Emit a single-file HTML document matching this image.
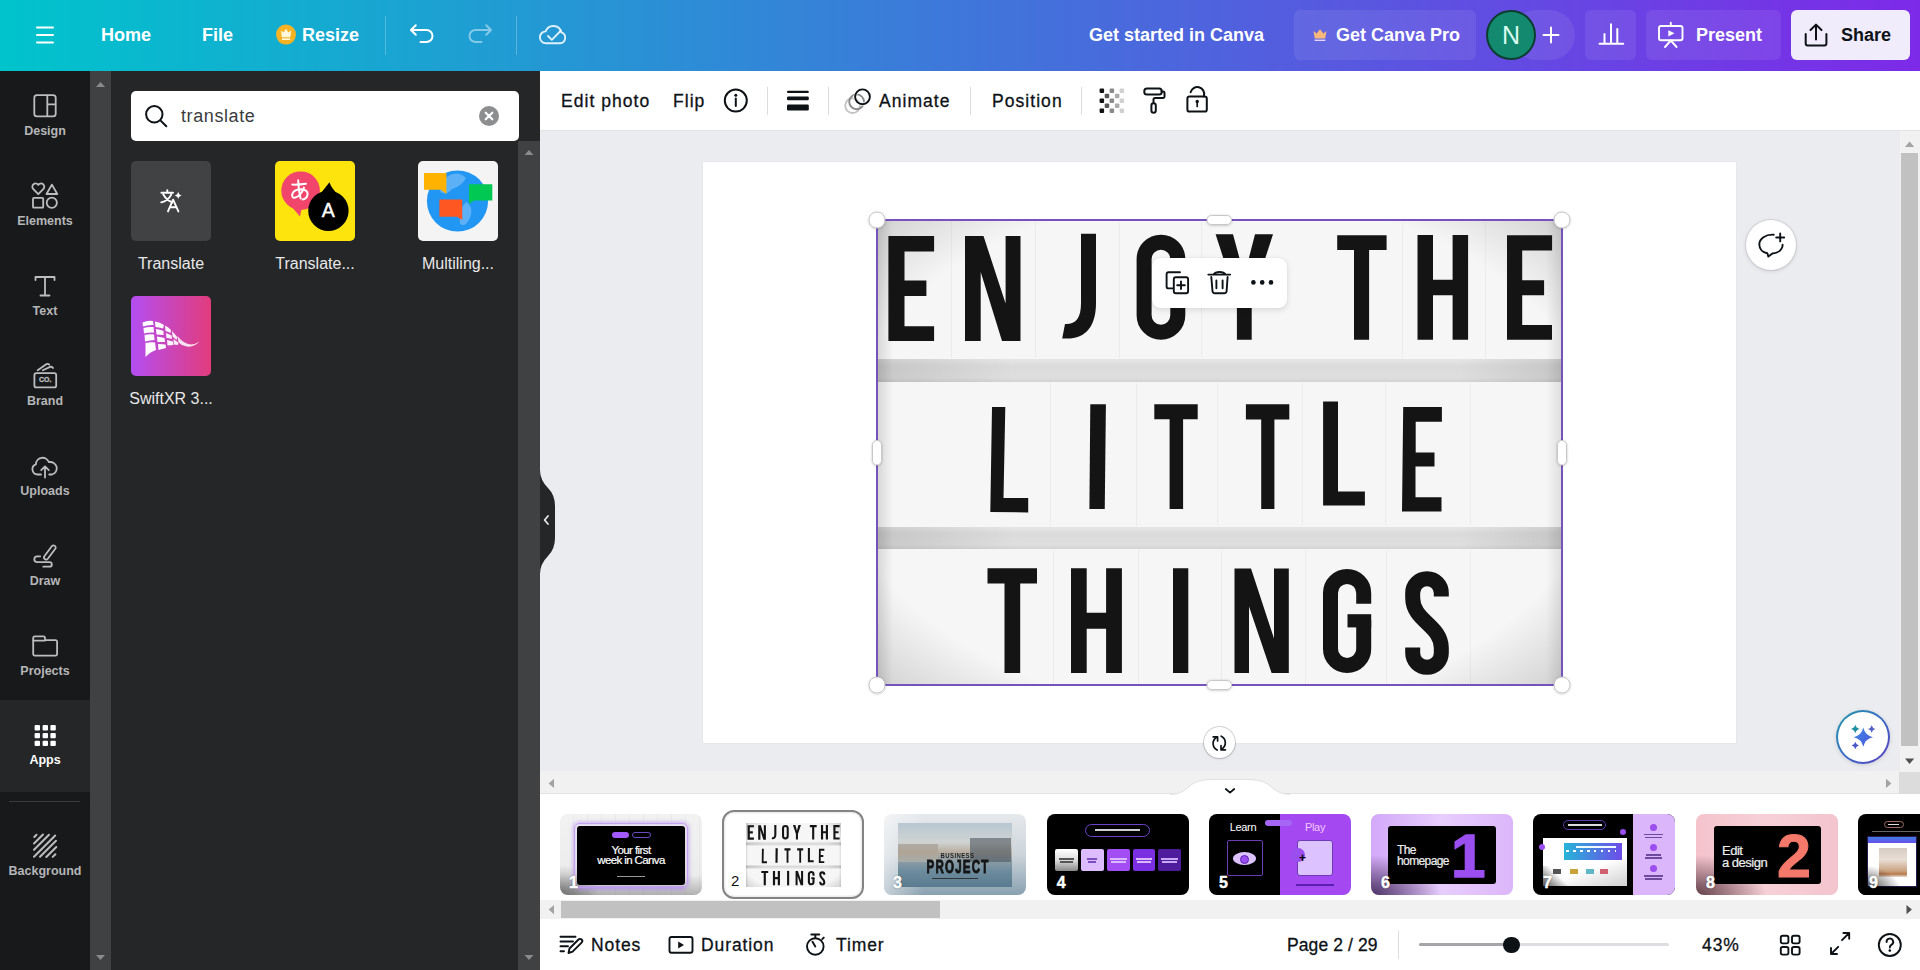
<!DOCTYPE html>
<html><head><meta charset="utf-8">
<style>
*{box-sizing:border-box;margin:0;padding:0}
html,body{width:1920px;height:970px;overflow:hidden;background:#fff;font-family:"Liberation Sans",sans-serif}
.a{position:absolute}
svg{display:block;overflow:visible}
#hdr{left:0;top:0;width:1920px;height:71px;background:linear-gradient(90deg,#00c4cc 0%,#7d2ae8 100%)}
.ht{color:#fff;font-weight:bold;font-size:18px;line-height:20px;white-space:nowrap}
.hbtn{background:rgba(255,255,255,0.08);border-radius:6px}
#side{left:0;top:71px;width:90px;height:899px;background:#18191b}
.nav{left:0;width:90px;height:90px}
.nl{position:absolute;left:0;width:90px;text-align:center;color:#b5b6b8;font-weight:bold;font-size:12.5px;line-height:14px}
.ni{position:absolute;left:33px;top:22px}
#track{left:90px;top:71px;width:21px;height:899px;background:#404143}
#panel{left:111px;top:71px;width:429px;height:899px;background:#252628}
#ptrack{left:518px;top:141px;width:22px;height:829px;background:#404143}
.tile{width:80px;height:80px;border-radius:5px;overflow:hidden}
.tl{color:#e8e8e8;font-size:16px;line-height:18px;white-space:nowrap;text-align:center}
#tool{left:540px;top:71px;width:1380px;height:60px;background:#fff;border-bottom:1px solid #e2e3e6}
.tt{color:#0d1216;font-size:17.5px;line-height:20px;white-space:nowrap;letter-spacing:1.05px;-webkit-text-stroke:0.3px #0d1216}
.dv{width:1px;height:28px;background:#dcdde0}
#canvas{left:540px;top:131px;width:1360px;height:640px;background:#ebecf0}
#vscroll{left:1900px;top:131px;width:20px;height:640px;background:#f1f1f1}
#hscroll{left:540px;top:771px;width:1380px;height:23px;background:#f1f1f1}
#film{left:540px;top:794px;width:1380px;height:176px;background:#fff}
.th{width:142px;height:81px;border-radius:8px;overflow:hidden;top:814px}
.num{position:absolute;left:6px;bottom:3px;color:#fff;font-weight:bold;font-size:16px;line-height:16px;text-shadow:0 0 2px rgba(0,0,0,.5);-webkit-text-stroke:0.4px #fff}
.ft{color:#0d1216;font-size:17.5px;line-height:20px;white-space:nowrap;letter-spacing:0.9px;-webkit-text-stroke:0.3px #0d1216}
</style></head><body>

<!-- HEADER -->
<div id="hdr" class="a">
  <!-- hamburger -->
  
  <div class="a ht" style="left:101px;top:25px">Home</div>
  <div class="a ht" style="left:202px;top:25px">File</div>
  
  <div class="a ht" style="left:302px;top:25px">Resize</div>
  <div class="a" style="left:385px;top:16px;width:1px;height:39px;background:rgba(255,255,255,0.25)"></div>
  <div class="a" style="left:516px;top:16px;width:1px;height:39px;background:rgba(255,255,255,0.25)"></div>
  <div class="a ht" style="left:1089px;top:25px">Get started in Canva</div>
  <div class="a hbtn" style="left:1294px;top:10px;width:182px;height:50px"></div>
  <div class="a ht" style="left:1336px;top:25px">Get Canva Pro</div>
  <div class="a hbtn" style="left:1511px;top:10px;width:64px;height:50px;border-radius:25px"></div>
  <div class="a" style="left:1486px;top:10px;width:50px;height:50px;border-radius:50%;background:#13896f;border:2px solid #0c3d30"></div>
  <div class="a" style="left:1486px;top:22px;width:50px;text-align:center;color:#d9fbef;font-size:25px;line-height:26px">N</div>
  <div class="a hbtn" style="left:1585px;top:10px;width:51px;height:50px"></div>
  <div class="a hbtn" style="left:1646px;top:10px;width:135px;height:50px"></div>
  <div class="a ht" style="left:1696px;top:25px">Present</div>
  <div class="a" style="left:1791px;top:10px;width:119px;height:50px;border-radius:6px;background:#f1ecfc"></div>
  <div class="a ht" style="left:1841px;top:25px;color:#0d1216">Share</div>
<svg class="a" style="left:36px;top:26px" width="18" height="18" viewBox="0 0 18 18"><path d="M1 1.5h16M1 9h16M1 16.5h16" stroke="#fff" stroke-width="2" stroke-linecap="round"/></svg>
<svg class="a" style="left:0;top:0" width="1920" height="71">
    <circle cx="286" cy="34.6" r="10" fill="#f8b324"/>
    <path d="M281 30.5 L283.6 32.6 L286 28.8 L288.4 32.6 L291.2 30.5 L290.2 37.3 H281.8 Z" fill="#fff8e0"/>
    <rect x="282" y="38.4" width="8.2" height="1.6" fill="#fff8e0"/>
    <g fill="none" stroke="#fff" stroke-width="2" stroke-linecap="round" stroke-linejoin="round">
      <path d="M415.8 25.2 L411 30 L415.8 34.8 M411.3 30 H426.5 A6 6 0 0 1 426.5 42 H420.5"/>
    </g>
    <g fill="none" stroke="rgba(255,255,255,0.45)" stroke-width="2" stroke-linecap="round" stroke-linejoin="round">
      <path d="M486.2 25.2 L491 30 L486.2 34.8 M490.7 30 H475.5 A6 6 0 0 0 475.5 42 H481.5"/>
    </g>
    <g fill="none" stroke="rgba(255,255,255,0.85)" stroke-width="1.9" stroke-linecap="round" stroke-linejoin="round">
      <path d="M546 43.2 H560 A5.6 5.6 0 0 0 561.3 32.3 A8.2 8.2 0 0 0 545.6 31.4 A5.9 5.9 0 0 0 546 43.2 Z"/>
      <path d="M548 36 L551.8 39.8 L561 30.5"/>
    </g>
    <path d="M1313.5 31 L1316.6 33.4 L1320 29.2 L1323.4 33.4 L1326.5 31 L1325.2 38.5 H1314.8 Z" fill="#f9b87a"/>
    <rect x="1314.6" y="39.6" width="10.8" height="1.4" fill="#e4d7fb"/>
    <g fill="none" stroke="#fff" stroke-width="2" stroke-linecap="round">
      <path d="M1551 27.5 V42.5 M1543.5 35 H1558.5"/>
      <path d="M1599.5 43.8 H1623.2 M1604.5 43 V34 M1611 43 V24.2 M1617.3 43 V29"/>
    </g>
    <g fill="none" stroke="#fff" stroke-width="1.9" stroke-linecap="round" stroke-linejoin="round">
      <rect x="1659" y="26" width="23.5" height="14.3" rx="2"/>
      <path d="M1670.8 22.8 V26 M1670.8 40.5 L1665 47 M1670.8 40.5 L1676.6 47"/>
    </g>
    <path d="M1668.3 30.2 L1674.5 33.3 L1668.3 36.4 Z" fill="#fff"/>
    <g fill="none" stroke="#0d1216" stroke-width="2" stroke-linecap="round" stroke-linejoin="round">
      <path d="M1810.5 30 L1816 24.6 L1821.5 30 M1816 25 V39.5"/>
      <path d="M1805.7 34 V43.5 A2 2 0 0 0 1807.7 45.5 H1824.4 A2 2 0 0 0 1826.4 43.5 V34"/>
    </g>
  </svg>
</div>

<!-- SIDEBAR -->
<div id="side" class="a">
  <div class="a" style="left:0;top:629px;width:90px;height:92px;background:#252628"></div>
  <div class="a" style="left:0;top:0;width:90px;height:629px;background:#18191b;border-bottom-right-radius:12px"></div>
  <div class="a" style="left:0;top:721px;width:90px;height:178px;background:#18191b;border-top-right-radius:12px"></div>
  <div class="a" style="left:9px;top:730px;width:71px;height:1px;background:#3a3b3e"></div>
  <div class="nl" style="top:53px">Design</div>
  <div class="nl" style="top:143px">Elements</div>
  <div class="nl" style="top:233px">Text</div>
  <div class="nl" style="top:323px">Brand</div>
  <div class="nl" style="top:413px">Uploads</div>
  <div class="nl" style="top:503px">Draw</div>
  <div class="nl" style="top:593px">Projects</div>
  <div class="nl" style="top:682px;color:#fff">Apps</div>
  <div class="nl" style="top:793px">Background</div>
</div>
<svg class="a" style="left:0;top:0" width="90" height="970">
  <g fill="none" stroke="#bcbdbf" stroke-width="1.8" stroke-linecap="round" stroke-linejoin="round">
    <rect x="34.3" y="95.1" width="21.4" height="21.2" rx="2.6"/>
    <path d="M47.3 95.5 V116 M47.6 104.4 H55.3"/>
    <path d="M38.3 194.2 L32.9 188.6 A3.1 3.1 0 0 1 38.3 184.9 A3.1 3.1 0 0 1 43.7 188.6 Z"/>
    <path d="M51.9 184.6 L57.3 194 H46.5 Z"/>
    <rect x="33" y="197.9" width="10.2" height="9.8" rx="0.8"/>
    <circle cx="51.8" cy="202.7" r="5.1"/>
    <path d="M35.5 277 H54.5 M45 277 V295.5 M40.5 295.5 H49.5 M35.5 277 V280 M54.5 277 V280"/>
    <rect x="34.4" y="373.2" width="21.8" height="14.2" rx="2"/>
    <path d="M37.7 370.2 L46.6 364.1 Q48.2 363.3 49.3 364.8 M42.8 370.2 L50.2 366.9 Q52 366.3 53 368"/>
    <path d="M41 474.5 H37.6 A5.2 5.2 0 0 1 35.9 464.4 A6.7 6.7 0 0 1 48.9 462.2 A5.6 5.6 0 0 1 52 474.5 H49.2"/>
    <path d="M45 477.6 V466.4 M41.2 470.2 L45 466.4 L48.8 470.2"/>
    <path d="M45.5 556.5 L53.2 546.3 A2.2 2.2 0 0 1 56.5 549 L48.8 559.2 A2 2 0 0 1 45.5 556.5 Z" transform="translate(-1,-0.5)"/>
    <path d="M40.2 556.3 H37.2 A2.9 2.9 0 0 0 37.2 562.1 H49.5 A2.3 2.3 0 0 1 49.5 566.7 H43.3"/>
    <path d="M33.2 638 A1.6 1.6 0 0 1 34.8 636.4 H43.4 A1.6 1.6 0 0 1 45 638 V640.2 H55.5 A1.6 1.6 0 0 1 57.1 641.8 V654 A1.6 1.6 0 0 1 55.5 655.6 H34.8 A1.6 1.6 0 0 1 33.2 654 Z"/>
    <path d="M33.2 640.6 H45"/>
  </g>
  <text x="45.3" y="382.4" text-anchor="middle" font-family="Liberation Sans" font-weight="bold" font-size="7" fill="#bcbdbf" stroke="#bcbdbf" stroke-width="0.3">CO.</text>
  <g fill="#fff">
    <rect x="34.6" y="725" width="5.4" height="5.4" rx="1"/><rect x="42.6" y="725" width="5.4" height="5.4" rx="1"/><rect x="50.4" y="725" width="5.4" height="5.4" rx="1"/>
    <rect x="34.6" y="732.9" width="5.4" height="5.4" rx="1"/><rect x="42.6" y="732.9" width="5.4" height="5.4" rx="1"/><rect x="50.4" y="732.9" width="5.4" height="5.4" rx="1"/>
    <rect x="34.6" y="740.7" width="5.4" height="5.4" rx="1"/><rect x="42.6" y="740.7" width="5.4" height="5.4" rx="1"/><rect x="50.4" y="740.7" width="5.4" height="5.4" rx="1"/>
  </g>
  <g stroke="#bcbdbf" stroke-width="2" stroke-linecap="round">
    <path d="M34.3 837 L36.5 834.8 M34 843.5 L43 834.5 M34 849.7 L49 834.7 M34 856.7 L55.2 835.5 M40 856.8 L56 840.8 M46.3 857 L56.3 847 M52.7 856.9 L55.4 854.2"/>
  </g>
</svg>
<div id="track" class="a"></div>
<div id="panel" class="a"></div>
<div id="ptrack" class="a"></div>
<!-- scroll arrows -->
<svg class="a" style="left:0;top:0" width="540" height="970">
  <path d="M96 87 L100.5 82 L105 87 Z" fill="#8a8b8d"/>
  <path d="M96 955 L100.5 960 L105 955 Z" fill="#8a8b8d"/>
  <path d="M524.5 155 L529 150 L533.5 155 Z" fill="#8a8b8d"/>
  <path d="M524.5 955 L529 960 L533.5 955 Z" fill="#8a8b8d"/>
</svg>
<!-- search -->
<div class="a" style="left:131px;top:91px;width:388px;height:50px;background:#fff;border-radius:5px"></div>
<svg class="a" style="left:0;top:0" width="540" height="300">
  <g fill="none" stroke="#0d1216" stroke-width="2" stroke-linecap="round">
    <circle cx="154.3" cy="114.3" r="8.2"/>
    <path d="M160.4 120.4 L166.3 126.3"/>
  </g>
  <circle cx="489" cy="116" r="10" fill="#8d8e90"/>
  <path d="M485.7 112.7 L492.3 119.3 M492.3 112.7 L485.7 119.3" stroke="#fff" stroke-width="2.2" stroke-linecap="round"/>
</svg>
<div class="a" style="left:181px;top:106px;color:#3b3c3e;font-size:18px;line-height:20px;letter-spacing:0.6px">translate</div>
<!-- tiles -->
<div class="a tile" style="left:131px;top:161px;background:#414244"></div>
<div class="a tile" style="left:275px;top:161px;background:#fde40c"></div>
<div class="a tile" style="left:418px;top:161px;background:#f4f4f4"></div>
<div class="a tile" style="left:131px;top:296px;background:linear-gradient(90deg,#b44ef2,#e23c7c)"></div>
<svg class="a" style="left:0;top:0" width="540" height="400">
  <g fill="none" stroke="#fff" stroke-width="1.9" stroke-linecap="round" stroke-linejoin="round">
    <path d="M161.4 192.8 H173 M167.3 190.2 V192.8 M163.3 194.6 Q166.8 200.6 172.3 202.4 M171.2 194.6 Q168.2 200.8 161.2 202.4"/>
    <path d="M168 211.4 L173.1 199.7 L178.4 211.4 M169.8 207.2 H176.6"/>
  </g>
  <path d="M178.2 191.5 Q178.7 195 181.8 195.5 Q178.7 196 178.2 199.3 Q177.7 196 174.6 195.5 Q177.7 195 178.2 191.5 Z" fill="#fff"/>
  <!-- tile 2 -->
  <circle cx="300.6" cy="190.7" r="19.3" fill="#f2456b"/>
  <path d="M291 206 L300 216.5 L302 206 Z" fill="#f2456b"/>
  <path d="M329.5 182.3 Q331 188 338.5 195 L321 193 Z" fill="#000"/>
  <circle cx="328.4" cy="210.8" r="20.2" fill="#000"/>
  <g fill="none" stroke="#fff" stroke-width="2" stroke-linecap="round" stroke-linejoin="round">
    <path d="M292.3 184.6 Q299 184.8 306 183.8"/>
    <path d="M298.2 180.3 Q298.3 190 300.6 198.4"/>
    <path d="M304 187.6 Q300.5 196.5 295.2 197.6 Q291.6 198.2 292.2 194.4 Q293.4 189.4 301.2 189.2 Q307.8 189.6 307.6 194.2 Q307.2 198.6 302.6 199.6"/>
  </g>
  <text x="328.2" y="216.8" text-anchor="middle" font-family="Liberation Sans" font-size="19.5" fill="#fff" stroke="#fff" stroke-width="0.4">A</text>
  <!-- tile 3 -->
  <circle cx="457.5" cy="201" r="30.6" fill="#2196f3"/>
  <path d="M448 176 Q458 170 466 178 Q462 186 452 189 Q446 196 440 192 Q441 182 448 176 Z M466 202 Q474 206 470 218 Q465 228 460 224 Q458 210 466 202 Z M480 190 Q486 192 484 200 Q479 198 480 190 Z" fill="#5cb0f5"/>
  <path d="M424 173 H446.4 V194 L441 189.8 H424 Z" fill="#ffb300"/>
  <path d="M469 184.2 H492.3 V200.5 H474 L469 204 Z" fill="#00c853"/>
  <path d="M439.4 199.5 H462.2 V220 L457 216.7 H439.4 Z" fill="#ff5722"/>
  <!-- tile 4 -->
  <g fill="#fff">
    <path d="M142.5 322.5 Q148 320 153 321 L153.5 325 Q148 324.5 143 326.5 Z"/>
    <path d="M143.5 328 Q148 326.5 153.5 327 L154 332.5 Q149 332 144 333.5 Z"/>
    <path d="M144.5 335 Q149 334 154 334.5 L154.5 340 Q150 340 145 341.5 Z"/>
    <path d="M145.5 343 Q150 342 155 342.5 L156 350 Q150 352 145.5 357 Z"/>
    <path d="M155 321.5 Q160 322 164 325 L163 328.5 Q159 327 155.5 327 Z"/>
    <path d="M156 329 Q160 329.5 163.5 331 L163.5 335 Q160 334.5 156.5 334.5 Z"/>
    <path d="M157 336.5 Q161 337 164.5 338 L165 342 Q161 342 157.5 342 Z"/>
    <path d="M158 344 Q162 344 165.5 344.5 L166 348 Q162 349 158.5 350 Z"/>
    <path d="M165 325.5 Q168.5 327 171 330 L170.5 333 Q168 331.5 165.5 331 Z" opacity="0.95"/>
    <path d="M166 333 Q169 334 171.5 335.5 L172 339 Q169 338 166.5 338 Z" opacity="0.95"/>
    <path d="M167 340 Q170 340.5 173 341.5 L173.5 345 Q170 345 167.5 345.5 Z" opacity="0.95"/>
    <path d="M172 331 Q175 334 177.5 337.5 L176.5 340 Q174.5 338 172.5 336.5 Z" opacity="0.9"/>
    <path d="M173.5 339 Q176 341 178.5 342.5 L178 345 Q175.5 344.5 174 344.5 Z" opacity="0.9"/>
    <path d="M177.5 336 Q182 342 188 344 Q194 345.5 199.5 341.5 Q194 347.5 187 346.5 Q181 345.5 178.5 342 Z" opacity="0.85"/>
  </g>
</svg>
<div class="a tl" style="left:121px;top:255px;width:100px">Translate</div>
<div class="a tl" style="left:265px;top:255px;width:100px">Translate...</div>
<div class="a tl" style="left:408px;top:255px;width:100px">Multiling...</div>
<div class="a tl" style="left:121px;top:390px;width:100px">SwiftXR 3...</div>


<!-- TOOLBAR -->
<div id="tool" class="a"></div>
<div class="a tt" id="t1" style="left:561px;top:91px">Edit photo</div>
<div class="a tt" id="t2" style="left:673px;top:91px">Flip</div>
<div class="a tt" id="t3" style="left:879px;top:91px">Animate</div>
<div class="a tt" id="t4" style="left:992px;top:91px">Position</div>
<div class="a dv" style="left:767px;top:87px"></div>
<div class="a dv" style="left:828px;top:87px"></div>
<div class="a dv" style="left:970px;top:87px"></div>
<div class="a dv" style="left:1081px;top:87px"></div>
<svg class="a" style="left:0;top:0" width="1920" height="131">
  <g fill="none" stroke="#0d1216" stroke-width="2" stroke-linecap="round" stroke-linejoin="round">
    <circle cx="735.8" cy="100.6" r="11"/>
    <path d="M735.8 98.5 V106"/>
    <rect x="1144.3" y="88.6" width="17.4" height="6" rx="2.6"/>
    <path d="M1161.6 91.5 H1163 A1.5 1.5 0 0 1 1164.5 93 V96.4 A1.5 1.5 0 0 1 1163 97.9 H1155 A1.5 1.5 0 0 0 1153.5 99.4 V103"/>
    <rect x="1151.4" y="103.2" width="4.4" height="9.6" rx="2.2"/>
    <rect x="1187.4" y="96.4" width="19.4" height="15.2" rx="2.2"/>
    <path d="M1190.6 92.3 A6.6 6.6 0 0 1 1204 95.6 V96.4"/>
  </g>
  <circle cx="735.8" cy="95.3" r="1.5" fill="#0d1216"/>
  <circle cx="1197.2" cy="101.5" r="1.7" fill="#0d1216"/>
  <path d="M1197.2 101.5 V106.5" stroke="#0d1216" stroke-width="1.7" stroke-linecap="round"/>
  <g fill="#0d1216">
    <rect x="787" y="90.8" width="21.8" height="2.2" rx="1"/>
    <rect x="787" y="96.6" width="21.8" height="3.6" rx="1.2"/>
    <rect x="787" y="104.6" width="21.8" height="5.9" rx="1.2"/>
  </g>
  <g fill="none" stroke-width="1.9">
    <circle cx="852.6" cy="105.6" r="7.4" stroke="#c4c4c4"/>
    <circle cx="856.6" cy="101.8" r="7.4" stroke="#8c8c8c"/>
    <circle cx="862.5" cy="96.8" r="7.4" stroke="#fff" stroke-width="3.5"/>
    <circle cx="862.5" cy="96.8" r="7.4" stroke="#0d1216"/>
  </g>
  <g>
    <rect x="1099.6" y="88.6" width="4.5" height="4.5" rx="1" fill="#111"/>
    <rect x="1099.6" y="98.4" width="4.5" height="4.5" rx="1" fill="#111"/>
    <rect x="1099.6" y="108.6" width="4.5" height="4.5" rx="1" fill="#111"/>
    <rect x="1104.7" y="93.7" width="4.5" height="4.5" rx="1" fill="#555"/>
    <rect x="1104.7" y="103.5" width="4.5" height="4.5" rx="1" fill="#555"/>
    <rect x="1109.6" y="88.6" width="4.5" height="4.5" rx="1" fill="#8a8a8a"/>
    <rect x="1109.6" y="98.4" width="4.5" height="4.5" rx="1" fill="#8a8a8a"/>
    <rect x="1109.6" y="108.6" width="4.5" height="4.5" rx="1" fill="#8a8a8a"/>
    <rect x="1114.9" y="93.7" width="4.5" height="4.5" rx="1" fill="#ababab"/>
    <rect x="1114.9" y="103.5" width="4.5" height="4.5" rx="1" fill="#ababab"/>
    <rect x="1119.6" y="88.6" width="4.5" height="4.5" rx="1" fill="#d0d0d0"/>
    <rect x="1119.6" y="98.4" width="4.5" height="4.5" rx="1" fill="#d0d0d0"/>
    <rect x="1119.6" y="108.6" width="4.5" height="4.5" rx="1" fill="#d0d0d0"/>
  </g>
</svg>
<div id="canvas" class="a"></div>
<div class="a" style="left:703px;top:162px;width:1033px;height:581px;background:#fff;box-shadow:0 0 1px rgba(0,0,0,0.12)"></div>
<!-- letterboard -->
<svg class="a" style="left:877px;top:220px" width="685" height="465" viewBox="877 220 685 465">
  <defs>
    <radialGradient id="vig" cx="50%" cy="50%" r="71%">
      <stop offset="0.78" stop-color="#000" stop-opacity="0"/>
      <stop offset="1" stop-color="#000" stop-opacity="0.15"/>
    </radialGradient>
    <linearGradient id="edl" x1="0" y1="0" x2="1" y2="0"><stop offset="0" stop-color="#000" stop-opacity="0.13"/><stop offset="1" stop-color="#000" stop-opacity="0"/></linearGradient>
    <linearGradient id="edr" x1="1" y1="0" x2="0" y2="0"><stop offset="0" stop-color="#000" stop-opacity="0.1"/><stop offset="1" stop-color="#000" stop-opacity="0"/></linearGradient>
    <linearGradient id="strip" x1="0" y1="0" x2="0" y2="1">
      <stop offset="0" stop-color="#e6e6e6"/>
      <stop offset="0.3" stop-color="#dbdbdb"/>
      <stop offset="0.8" stop-color="#dedede"/>
      <stop offset="1" stop-color="#d3d3d3"/>
    </linearGradient>
    <linearGradient id="stripx" x1="0" y1="0" x2="1" y2="0">
      <stop offset="0" stop-color="#000" stop-opacity="0.1"/>
      <stop offset="0.2" stop-color="#000" stop-opacity="0"/>
      <stop offset="0.85" stop-color="#000" stop-opacity="0"/>
      <stop offset="1" stop-color="#000" stop-opacity="0.1"/>
    </linearGradient>
  </defs>
  <rect x="877" y="220" width="685" height="465" fill="#f6f6f6"/>
  <g stroke="#ececec" stroke-width="1">
    <path d="M951.5 222 V358 M1035.5 222 V358 M1119.5 222 V358 M1201.5 222 V358 M1402.5 222 V358 M1485.5 222 V358"/>
    <path d="M1050.5 383 V526 M1136.5 383 V526 M1217.5 383 V526 M1302.5 383 V526 M1385.5 383 V526 M1470.5 383 V526"/>
    <path d="M1053.5 550 V684 M1138.5 550 V684 M1221.5 550 V684 M1305.5 550 V684 M1386.5 550 V684 M1470.5 550 V684"/>
  </g>
  <rect x="877" y="359" width="685" height="23" fill="url(#strip)"/>
  <rect x="877" y="527" width="685" height="22" fill="url(#strip)"/>
  <rect x="877" y="359" width="685" height="23" fill="url(#stripx)"/>
  <rect x="877" y="527" width="685" height="22" fill="url(#stripx)"/>
  <rect x="877" y="220" width="685" height="465" fill="url(#vig)"/><rect x="877" y="220" width="16" height="465" fill="url(#edl)"/><rect x="1546" y="220" width="16" height="465" fill="url(#edr)"/>
  <g fill="#141414">
    <!-- ENJOY THE -->
    <path d="M888.4 236 H934.1 V251.4 H904.5 V280.4 H926.4 V295.9 H904.5 V326.2 H934.1 V341 H888.4 Z"/>
    <path d="M965 236 H983.5 L1005.6 303.6 V236 H1020.5 V341 H1002 L980.7 272 V341 H965 Z"/>
    <path d="M1081 233.8 H1096 V303 C1096 326 1086 339 1066 338.6 L1062.2 338.6 L1065 324 C1076 324.5 1081 318 1081 303 Z"/>
    <path d="M1337.2 235.3 H1386.6 V250.1 H1369.1 V339.7 H1354 V250.1 H1337.2 Z"/>
    <path d="M1417.5 235 H1433 V279.8 H1452.6 V235 H1468.1 V339.7 H1452.6 V295.2 H1433 V339.7 H1417.5 Z"/>
    <path d="M1507 235.3 H1552.1 V250.5 H1522.2 V280.2 H1544.1 V295.2 H1522.2 V324.9 H1552 V339.7 H1507 Z"/>
    <path d="M1215.6 234.3 H1233 L1244.3 276 L1255 234.3 H1273 L1251.7 300 V339.7 H1236.9 V300 Z"/>
    <!-- LITTLE -->
    <path d="M992 407 H1005.3 L1003.5 498 H1028.2 V512.5 L990.3 512 Z"/>
    <path d="M1090.3 404.2 H1105.9 L1104.75 509 H1089.4 Z"/>
    <path d="M1154.3 404.2 H1197.7 V419.2 H1183.1 V509 H1169.6 V419.2 H1154.3 Z"/>
    <path d="M1245.9 404.2 H1289.3 V419.5 H1274.4 V509 H1261.2 V419.5 H1245.9 Z"/>
    <path d="M1323.1 401.4 H1338 V491.4 H1364.9 V505.5 H1323.1 Z"/>
    <path d="M1403.2 407 H1441.9 V421.7 H1415.7 V452.4 H1434.5 V466.6 H1415.5 V497.2 H1441.5 V511.4 H1402 Z"/>
    <!-- THINGS -->
    <path d="M987.5 568.2 H1037 V583.5 H1020.2 V673 H1004.5 V583.5 H987.5 Z"/>
    <path d="M1071 568.2 H1086.7 V612.8 H1106.1 V568.2 H1121.9 V673 H1106.1 V628.8 H1086.7 V673 H1071 Z"/>
    <path d="M1173 568.2 H1188.3 V673 H1173 Z"/>
    <path d="M1234.5 568.6 H1251 L1274 638.5 V568.6 H1288.8 V673 H1271.6 L1249 606.5 V673 H1234.5 Z"/>
    <rect x="1347.5" y="614.2" width="23.7" height="13.2"/>
  </g>
  <g fill="none" stroke="#141414" stroke-width="15">
    <rect x="1144.1" y="242.2" width="33.7" height="90" rx="16.85"/>
    <path d="M1363.7 603.7 V593 A16.6 16.6 0 0 0 1330.5 593 V648.9 A16.6 16.6 0 0 0 1363.7 648.9 V620"/>
    <path d="M1441.3 596.5 V593 A14.3 14.3 0 0 0 1412.7 593 V598 C1412.7 621 1441.3 625 1441.3 648 V653 A14.3 14.3 0 0 1 1412.7 653 V647.5"/>
  </g>
</svg>
<!-- selection -->
<svg class="a" style="left:0;top:0" width="1920" height="800">
  <defs>
    <filter id="hs" x="-50%" y="-50%" width="200%" height="200%"><feDropShadow dx="0" dy="0.5" stdDeviation="0.8" flood-color="#000" flood-opacity="0.25"/></filter>
  </defs>
  <rect x="877" y="220" width="685" height="465" fill="none" stroke="#7652bd" stroke-width="2"/>
  <g fill="#fff" stroke="#c8c8c8" stroke-width="1" filter="url(#hs)">
    <circle cx="877" cy="220" r="8"/>
    <circle cx="1562" cy="220" r="8"/>
    <circle cx="877" cy="685" r="8"/>
    <circle cx="1562" cy="685" r="8"/>
    <rect x="1207" y="215.5" width="24.5" height="9" rx="4.5"/>
    <rect x="1207" y="680.5" width="24.5" height="9" rx="4.5"/>
    <rect x="872.5" y="440.5" width="9" height="24.5" rx="4.5"/>
    <rect x="1557.5" y="440.5" width="9" height="24.5" rx="4.5"/>
  </g>
</svg>
<!-- floating toolbar -->
<div class="a" style="left:1152px;top:258px;width:135px;height:49.5px;background:#fff;border-radius:8px;box-shadow:0 2px 6px rgba(0,0,0,0.12),0 0 1px rgba(0,0,0,0.15)"></div>
<svg class="a" style="left:0;top:0" width="1920" height="800">
  <g fill="none" stroke="#0d1216" stroke-width="1.9" stroke-linecap="round" stroke-linejoin="round">
    <path d="M1180 272.3 H1168.6 A2 2 0 0 0 1166.6 274.3 V286.4 A2 2 0 0 0 1168.6 288.4 H1173"/>
    <rect x="1173.8" y="277.3" width="14.3" height="16" rx="2"/>
    <path d="M1181 281.5 V289 M1177.2 285.3 H1184.8"/>
    <path d="M1208.3 274.6 H1230.2 M1213.5 274.6 A6.5 4 0 0 1 1225.6 274.6 M1211.3 277 L1212.5 291 A2.3 2.3 0 0 0 1214.8 293.3 H1224.3 A2.3 2.3 0 0 0 1226.6 291 L1227.6 277 M1216.4 280.5 V288.3 M1222.6 280.5 V288.3"/>
  </g>
  <g fill="#0d1216"><circle cx="1253.4" cy="282.4" r="2.3"/><circle cx="1262.2" cy="282.4" r="2.3"/><circle cx="1271" cy="282.4" r="2.3"/></g>
</svg>
<!-- rotate button -->
<div class="a" style="left:1203.5px;top:726.8px;width:31px;height:31px;border-radius:50%;background:#fff;box-shadow:0 0 0 1px rgba(0,0,0,0.16),0 1px 3px rgba(0,0,0,0.1)"></div>
<svg class="a" style="left:1204px;top:727.5px" width="30" height="30" viewBox="0 0 30 30">
  <g fill="none" stroke="#0d1216" stroke-width="1.7" stroke-linecap="round" stroke-linejoin="round">
    <path d="M13.2 22 A7.2 7.2 0 0 1 12.8 9.2 M17.2 8.2 A7.2 7.2 0 0 1 17.6 21"/>
    <path d="M9.2 8.9 H13.6 V13 M17 17.5 V21.8 H21.4"/>
  </g>
</svg>
<!-- comment button -->
<div class="a" style="left:1746px;top:220px;width:50px;height:50px;border-radius:50%;background:#fff;box-shadow:0 0 0 1px rgba(0,0,0,0.07),0 1px 4px rgba(0,0,0,0.14)"></div>
<svg class="a" style="left:1746px;top:220px" width="50" height="50" viewBox="0 0 50 50">
  <g fill="none" stroke="#0d1216" stroke-width="1.9" stroke-linecap="round" stroke-linejoin="round">
    <path d="M27.7 14.7 C19.5 14.2 13.3 18.8 13.3 24.5 C13.3 29 16.8 32.4 21.3 33.3 L22.4 36.6 L26.4 33.5 C32.3 32.8 36.6 29.5 36.6 24.8"/>
    <path d="M34.2 13.5 V21.4 M30.2 17.5 H38.2"/>
  </g>
</svg>
<!-- magic button -->
<div class="a" style="left:1836px;top:710px;width:54px;height:54px;border-radius:50%;background:linear-gradient(135deg,#1f9aa6,#3a6cc6 50%,#5a3cc0);box-shadow:0 1px 4px rgba(0,0,0,0.12)"></div>
<div class="a" style="left:1838px;top:712px;width:50px;height:50px;border-radius:50%;background:#fff"></div>
<svg class="a" style="left:1836px;top:710px" width="54" height="54" viewBox="0 0 54 54">
  <defs><linearGradient id="mg" x1="0" y1="0" x2="1" y2="1"><stop offset="0" stop-color="#3a8ae0"/><stop offset="1" stop-color="#4f55e0"/></linearGradient></defs>
  <path d="M27.3 17.6 Q29.028000000000002 25.471999999999998 36.9 27.2 Q29.028000000000002 28.928 27.3 36.8 Q25.572 28.928 17.700000000000003 27.2 Q25.572 25.471999999999998 27.3 17.6 Z" fill="url(#mg)"/><path d="M19.3 14.499999999999998 Q20.092000000000002 18.107999999999997 23.700000000000003 18.9 Q20.092000000000002 19.692 19.3 23.299999999999997 Q18.508 19.692 14.9 18.9 Q18.508 18.107999999999997 19.3 14.499999999999998 Z" fill="#1f8fa0"/><path d="M35.7 15.3 Q36.366 18.334 39.400000000000006 19 Q36.366 19.666 35.7 22.7 Q35.034000000000006 19.666 32.0 19 Q35.034000000000006 18.334 35.7 15.3 Z" fill="#5560c4"/><path d="M19.3 31.8 Q19.966 34.834 23.0 35.5 Q19.966 36.166 19.3 39.2 Q18.634 36.166 15.600000000000001 35.5 Q18.634 34.834 19.3 31.8 Z" fill="#4a58c8"/>
</svg>
<div id="vscroll" class="a"></div>
<div class="a" style="left:1901px;top:153px;width:17px;height:593px;background:#c1c1c1"></div>
<div id="hscroll" class="a" style="border-bottom:1px solid #e3e3e3"></div>
<div class="a" style="left:1899px;top:772px;width:21px;height:22px;background:#dcdcdc"></div>
<div id="film" class="a"></div>
<!-- tab with chevron -->
<svg class="a" style="left:1170px;top:776px" width="120" height="22" viewBox="0 0 120 22">
  <path d="M0 19 Q10 19 18 12 Q26 4 40 4 H80 Q94 4 102 12 Q110 19 120 19 V22 H0 Z" fill="#fff"/>
  <path d="M0 18.5 Q10 18.5 18 11.5 Q26 3.5 40 3.5 H80 Q94 3.5 102 11.5 Q110 18.5 120 18.5" fill="none" stroke="#e2e2e2" stroke-width="1"/>
  <path d="M55.8 13 L60 16.6 L64.2 13" fill="none" stroke="#0d1216" stroke-width="1.8" stroke-linecap="round" stroke-linejoin="round"/>
</svg>
<!-- thumbnails -->
<div class="a th" style="left:560px;background:linear-gradient(180deg,#f2f2f2 0%,#ececec 75%,#cfcfcf 88%,#b0b0b0 100%)">
  <div class="a" style="left:0;top:0;width:142px;height:81px;background:radial-gradient(ellipse 40px 30px at 0% 100%,rgba(40,40,40,0.5),rgba(40,40,40,0) 100%)"></div>
  <div class="a" style="left:0;top:0;width:142px;height:81px;background:repeating-linear-gradient(90deg,transparent 0 13px,rgba(0,0,0,0.03) 13px 14px)"></div>
  <div class="a" style="left:14px;top:9px;width:114px;height:65px;border-radius:5px;border:1.5px solid #c6a4f4;box-shadow:0 0 4px 1px rgba(175,130,240,0.6),inset 0 0 3px rgba(175,130,240,0.6)"></div>
  <div class="a" style="left:17px;top:12px;width:108px;height:59px;border-radius:3px;background:#000"></div>
  <div class="a" style="left:18px;top:72px;width:106px;height:6px;background:linear-gradient(180deg,rgba(180,140,240,0.5),rgba(180,140,240,0))"></div>
  <div class="a" style="left:52px;top:18px;width:17px;height:5.5px;border-radius:3px;background:#a259ff"></div>
  <div class="a" style="left:72px;top:18px;width:19px;height:5.5px;border-radius:3px;border:1px solid #6a4bc0"></div>
  <div class="a" style="left:17.5px;top:30.5px;width:107px;text-align:center;color:#fff;font-size:11.5px;line-height:10.5px;letter-spacing:-0.6px;-webkit-text-stroke:0.2px #fff">Your first<br>week in Canva</div>
  <div class="a" style="left:57px;top:61.5px;width:28px;height:1.5px;background:#999"></div>
  <div class="num" style="left:9px;bottom:4px">1</div>
</div>
<div class="a" style="left:722px;top:810px;width:142px;height:89px;border-radius:12px;border:2px solid #848484;background:#fff;box-shadow:inset 0 0 0 1.5px #eeeeee"></div>
<svg class="a" style="left:745.5px;top:823px" width="95" height="64" viewBox="877 220 685 465" preserveAspectRatio="none">
  <defs>
    <radialGradient id="vig2" cx="50%" cy="50%" r="71%">
      <stop offset="0.78" stop-color="#000" stop-opacity="0"/>
      <stop offset="1" stop-color="#000" stop-opacity="0.15"/>
    </radialGradient>
    <linearGradient id="edl2" x1="0" y1="0" x2="1" y2="0"><stop offset="0" stop-color="#000" stop-opacity="0.13"/><stop offset="1" stop-color="#000" stop-opacity="0"/></linearGradient>
    <linearGradient id="edr2" x1="1" y1="0" x2="0" y2="0"><stop offset="0" stop-color="#000" stop-opacity="0.1"/><stop offset="1" stop-color="#000" stop-opacity="0"/></linearGradient>
    <linearGradient id="strip2" x1="0" y1="0" x2="0" y2="1">
      <stop offset="0" stop-color="#e6e6e6"/>
      <stop offset="0.3" stop-color="#dbdbdb"/>
      <stop offset="0.8" stop-color="#dedede"/>
      <stop offset="1" stop-color="#d3d3d3"/>
    </linearGradient>
    <linearGradient id="stripx2" x1="0" y1="0" x2="1" y2="0">
      <stop offset="0" stop-color="#000" stop-opacity="0.1"/>
      <stop offset="0.2" stop-color="#000" stop-opacity="0"/>
      <stop offset="0.85" stop-color="#000" stop-opacity="0"/>
      <stop offset="1" stop-color="#000" stop-opacity="0.1"/>
    </linearGradient>
  </defs>
  <rect x="877" y="220" width="685" height="465" fill="#f6f6f6"/>
  <g stroke="#ececec" stroke-width="1">
    <path d="M951.5 222 V358 M1035.5 222 V358 M1119.5 222 V358 M1201.5 222 V358 M1402.5 222 V358 M1485.5 222 V358"/>
    <path d="M1050.5 383 V526 M1136.5 383 V526 M1217.5 383 V526 M1302.5 383 V526 M1385.5 383 V526 M1470.5 383 V526"/>
    <path d="M1053.5 550 V684 M1138.5 550 V684 M1221.5 550 V684 M1305.5 550 V684 M1386.5 550 V684 M1470.5 550 V684"/>
  </g>
  <rect x="877" y="359" width="685" height="23" fill="url(#strip2)"/>
  <rect x="877" y="527" width="685" height="22" fill="url(#strip2)"/>
  <rect x="877" y="359" width="685" height="23" fill="url(#stripx2)"/>
  <rect x="877" y="527" width="685" height="22" fill="url(#stripx2)"/>
  <rect x="877" y="220" width="685" height="465" fill="url(#vig2)"/><rect x="877" y="220" width="16" height="465" fill="url(#edl2)"/><rect x="1546" y="220" width="16" height="465" fill="url(#edr2)"/>
  <g fill="#141414">
    <!-- ENJOY THE -->
    <path d="M888.4 236 H934.1 V251.4 H904.5 V280.4 H926.4 V295.9 H904.5 V326.2 H934.1 V341 H888.4 Z"/>
    <path d="M965 236 H983.5 L1005.6 303.6 V236 H1020.5 V341 H1002 L980.7 272 V341 H965 Z"/>
    <path d="M1081 233.8 H1096 V303 C1096 326 1086 339 1066 338.6 L1062.2 338.6 L1065 324 C1076 324.5 1081 318 1081 303 Z"/>
    <path d="M1337.2 235.3 H1386.6 V250.1 H1369.1 V339.7 H1354 V250.1 H1337.2 Z"/>
    <path d="M1417.5 235 H1433 V279.8 H1452.6 V235 H1468.1 V339.7 H1452.6 V295.2 H1433 V339.7 H1417.5 Z"/>
    <path d="M1507 235.3 H1552.1 V250.5 H1522.2 V280.2 H1544.1 V295.2 H1522.2 V324.9 H1552 V339.7 H1507 Z"/>
    <path d="M1215.6 234.3 H1233 L1244.3 276 L1255 234.3 H1273 L1251.7 300 V339.7 H1236.9 V300 Z"/>
    <!-- LITTLE -->
    <path d="M992 407 H1005.3 L1003.5 498 H1028.2 V512.5 L990.3 512 Z"/>
    <path d="M1090.3 404.2 H1105.9 L1104.75 509 H1089.4 Z"/>
    <path d="M1154.3 404.2 H1197.7 V419.2 H1183.1 V509 H1169.6 V419.2 H1154.3 Z"/>
    <path d="M1245.9 404.2 H1289.3 V419.5 H1274.4 V509 H1261.2 V419.5 H1245.9 Z"/>
    <path d="M1323.1 401.4 H1338 V491.4 H1364.9 V505.5 H1323.1 Z"/>
    <path d="M1403.2 407 H1441.9 V421.7 H1415.7 V452.4 H1434.5 V466.6 H1415.5 V497.2 H1441.5 V511.4 H1402 Z"/>
    <!-- THINGS -->
    <path d="M987.5 568.2 H1037 V583.5 H1020.2 V673 H1004.5 V583.5 H987.5 Z"/>
    <path d="M1071 568.2 H1086.7 V612.8 H1106.1 V568.2 H1121.9 V673 H1106.1 V628.8 H1086.7 V673 H1071 Z"/>
    <path d="M1173 568.2 H1188.3 V673 H1173 Z"/>
    <path d="M1234.5 568.6 H1251 L1274 638.5 V568.6 H1288.8 V673 H1271.6 L1249 606.5 V673 H1234.5 Z"/>
    <rect x="1347.5" y="614.2" width="23.7" height="13.2"/>
  </g>
  <g fill="none" stroke="#141414" stroke-width="15">
    <rect x="1144.1" y="242.2" width="33.7" height="90" rx="16.85"/>
    <path d="M1363.7 603.7 V593 A16.6 16.6 0 0 0 1330.5 593 V648.9 A16.6 16.6 0 0 0 1363.7 648.9 V620"/>
    <path d="M1441.3 596.5 V593 A14.3 14.3 0 0 0 1412.7 593 V598 C1412.7 621 1441.3 625 1441.3 648 V653 A14.3 14.3 0 0 1 1412.7 653 V647.5"/>
  </g>
</svg>
<div class="a" style="left:731px;top:873px;color:#0d1216;font-size:15px;line-height:16px">2</div>
<div class="a th" style="left:884px;background:linear-gradient(180deg,#e6e9ec,#ccd4da 50%,#8aa1b0)">
  <div class="a" style="left:0;top:0;width:40px;height:81px;background:linear-gradient(90deg,rgba(255,255,255,0.5),rgba(255,255,255,0))"></div>
  <div class="a" style="left:14px;top:8.5px;width:113.5px;height:64px;background:linear-gradient(180deg,#b8c7d2 0%,#cfd3d2 30%,#b9aea0 45%,#8f9ea6 58%,#6d8c9e 75%,#5a7b8f 100%)"></div>
  <div class="a" style="left:14px;top:30px;width:40px;height:18px;background:linear-gradient(180deg,rgba(120,110,100,0.35),rgba(200,190,170,0.5))"></div>
  <div class="a" style="left:86px;top:24px;width:41px;height:24px;background:linear-gradient(180deg,rgba(70,78,86,0.55),rgba(90,100,108,0.75))"></div>
  <div class="a" style="left:54px;top:37.5px;width:34px;text-align:center;color:#1e1e1e;font-weight:bold;font-size:7px;line-height:7px;letter-spacing:0.5px;transform:scaleX(0.85)">BUSINESS</div>
  <div class="a" style="left:28px;top:45px;width:86px;text-align:center;color:#151515;font-weight:bold;font-size:17.5px;line-height:16px;letter-spacing:1.8px;transform:scaleX(0.66);-webkit-text-stroke:0.9px #151515">PROJECT</div>
  <div class="a" style="left:48px;top:63.5px;width:46px;height:1.5px;background:#333"></div>
  <div class="num" style="left:9px;bottom:4px">3</div>
</div>
<div class="a th" style="left:1046.7px;background:#000">
  <div class="a" style="left:38px;top:9.5px;width:65px;height:13.5px;border-radius:7px;border:1.2px solid #6d43c9"></div>
  <div class="a" style="left:48px;top:15px;width:45px;height:2px;background:#cfcfcf"></div>
  <div class="a" style="left:12px;top:44px;width:15px;height:1.5px;background:#555;z-index:1"></div><div class="a" style="left:13px;top:47px;width:13px;height:1.5px;background:#555;z-index:1"></div>
  <div class="a" style="left:40px;top:44px;width:10px;height:1.5px;background:#7b4fc0;z-index:1"></div><div class="a" style="left:41px;top:47px;width:8px;height:1.5px;background:#7b4fc0;z-index:1"></div>
  <div class="a" style="left:63px;top:44px;width:17px;height:1.5px;background:#d9b8ff;z-index:1"></div><div class="a" style="left:64px;top:47px;width:15px;height:1.5px;background:#d9b8ff;z-index:1"></div>
  <div class="a" style="left:89px;top:44px;width:16px;height:1.5px;background:#d9b8ff;z-index:1"></div><div class="a" style="left:90px;top:47px;width:14px;height:1.5px;background:#d9b8ff;z-index:1"></div>
  <div class="a" style="left:114px;top:44px;width:17px;height:1.5px;background:#c9a8f5;z-index:1"></div><div class="a" style="left:115px;top:47px;width:15px;height:1.5px;background:#c9a8f5;z-index:1"></div>
  <div class="a" style="left:8.5px;top:35px;width:22.5px;height:22px;border-radius:2px;background:linear-gradient(180deg,#fff,#ddd 50%,#888)"></div>
  <div class="a" style="left:34.5px;top:35px;width:22.5px;height:22px;border-radius:2px;background:#dcbcff"></div>
  <div class="a" style="left:60.5px;top:35px;width:22.5px;height:22px;border-radius:2px;background:#a24ef4"></div>
  <div class="a" style="left:86px;top:35px;width:22.5px;height:22px;border-radius:2px;background:#7a2fe0"></div>
  <div class="a" style="left:111.5px;top:35px;width:22.5px;height:22px;border-radius:2px;background:#4e1c9c"></div>
  <div class="num" style="left:10px;bottom:4px">4</div>
</div>
<div class="a th" style="left:1209px;background:linear-gradient(90deg,#000 50%,#a449f2 50%)">
  <div class="a" style="left:56px;top:6px;width:27px;height:6px;border-radius:3px;background:#a566f5"></div>
  <div class="a" style="left:14px;top:8px;width:40px;color:#fff;font-size:11px;line-height:11px;text-align:center;letter-spacing:-0.3px">Learn</div>
  <div class="a" style="left:86px;top:8px;width:40px;color:#f3c6ff;font-size:11px;line-height:11px;text-align:center;letter-spacing:-0.3px">Play</div>
  <div class="a" style="left:17.5px;top:26px;width:36px;height:36px;border-radius:2px;border:1px solid #6a3db5"></div>
  <div class="a" style="left:24px;top:38px;width:23px;height:13px;border-radius:50%;background:#dcc2ff"></div>
  <div class="a" style="left:31px;top:40.5px;width:9px;height:9px;border-radius:50%;background:#9a4ef0;border:1.5px solid #5a1fb0"></div>
  <div class="a" style="left:88px;top:26px;width:36px;height:36px;border-radius:3px;background:#dcc2ff;border:1px solid #6a3db5"></div>
  <div class="a" style="left:82px;top:33.5px;width:14px;height:14px;border-radius:50%;background:#9a4ef0"></div>
  <div class="a" style="left:90px;top:38px;color:#000;font-size:12px;line-height:12px;font-weight:bold">+</div>
  <div class="a" style="left:87px;top:70px;width:38px;height:2px;background:#5a1fb0"></div>
  <div class="num" style="left:10px;bottom:4px">5</div>
</div>
<div class="a th" style="left:1371px;background:linear-gradient(90deg,#d3a9f9,#e7cdfd 50%,#dcb6fb)">
  <div class="a" style="left:0;top:0;width:142px;height:81px;background:radial-gradient(ellipse 70px 40px at 0% 100%,rgba(40,20,60,0.8),rgba(40,20,60,0) 100%)"></div>
  <div class="a" style="left:17px;top:12px;width:108px;height:57.5px;border-radius:3px;background:#000"></div>
  <div class="a" style="left:26px;top:31px;color:#eee;font-size:12px;line-height:11px;letter-spacing:-0.6px;-webkit-text-stroke:0.2px #eee">The<br>homepage</div>
  <svg class="a" style="left:0;top:0" width="142" height="81"><text x="80" y="63" font-family="Liberation Sans" font-weight="bold" font-size="62" fill="#9b4ff0" stroke="#9b4ff0" stroke-width="1.5">1</text></svg>
  <div class="num" style="left:10px;bottom:4px">6</div>
</div>
<div class="a th" style="left:1533px;background:#000">
  <div class="a" style="left:100px;top:0;width:42px;height:81px;background:#dcb6fb"></div>
  <div class="a" style="left:30px;top:6px;width:43px;height:10px;border-radius:5px;border:1.2px solid #5b3aa8"></div>
  <div class="a" style="left:10px;top:24px;width:84px;height:48px;background:linear-gradient(160deg,#fff 60%,#cfcfcf)"></div>
  <div class="a" style="left:31px;top:29px;width:58px;height:17px;background:linear-gradient(90deg,#27b4d8,#6d4ce8)"></div>
  <div class="a" style="left:10px;top:52px;width:30px;height:29px;background:linear-gradient(45deg,rgba(0,0,0,0.9),rgba(0,0,0,0) 60%)"></div>
  <div class="a" style="left:20px;top:55px;width:55px;height:5px;background:linear-gradient(90deg,#555 0 15%,transparent 15% 30%,#c9a23a 30% 45%,transparent 45% 60%,#5fb7c5 60% 75%,transparent 75% 85%,#d06070 85%)"></div>
  <div class="a" style="left:117px;top:10px;width:7px;height:7px;border-radius:50%;background:#9b4ff0"></div>
  <div class="a" style="left:117px;top:30px;width:7px;height:7px;border-radius:50%;background:#9b4ff0"></div>
  <div class="a" style="left:117px;top:51px;width:7px;height:7px;border-radius:50%;background:#9b4ff0"></div>
  <div class="a" style="left:111px;top:19.5px;width:19px;height:1.5px;background:#6d4a9e"></div><div class="a" style="left:112px;top:22.5px;width:17px;height:1.5px;background:#6d4a9e"></div>
  <div class="a" style="left:113px;top:40px;width:15px;height:1.5px;background:#6d4a9e"></div><div class="a" style="left:112px;top:43px;width:17px;height:1.5px;background:#6d4a9e"></div>
  <div class="a" style="left:111px;top:61px;width:19px;height:1.5px;background:#6d4a9e"></div><div class="a" style="left:112px;top:64px;width:17px;height:1.5px;background:#6d4a9e"></div>
  <div class="a" style="left:35px;top:10px;width:34px;height:2px;background:#ddd"></div>
  <div class="a" style="left:43px;top:31.5px;width:40px;height:2px;background:#eefaff"></div>
  <div class="a" style="left:33px;top:36px;width:50px;height:2px;background:repeating-linear-gradient(90deg,#fff 0 2.5px,transparent 2.5px 7px)"></div>
  <div class="a" style="left:6px;top:30px;width:6px;height:6px;border-radius:50%;background:#9b4ff0"></div>
  <div class="a" style="left:87px;top:15px;width:6px;height:6px;border-radius:50%;background:#9b4ff0"></div>
  <div class="num" style="left:10px;bottom:4px">7</div>
</div>
<div class="a th" style="left:1696px;background:linear-gradient(90deg,#f4c3cc,#f7d0d7 50%,#f3c4cd)">
  <div class="a" style="left:0;top:0;width:142px;height:81px;background:radial-gradient(ellipse 70px 40px at 0% 100%,rgba(60,30,40,0.8),rgba(60,30,40,0) 100%)"></div>
  <div class="a" style="left:17.5px;top:12px;width:107px;height:58px;border-radius:3px;background:#000"></div>
  <div class="a" style="left:26px;top:31px;color:#eee;font-size:13px;line-height:11.5px;letter-spacing:-0.5px;-webkit-text-stroke:0.2px #eee">Edit<br>a design</div>
  <svg class="a" style="left:0;top:0" width="142" height="81"><text x="81" y="63" font-family="Liberation Sans" font-weight="bold" font-size="61" fill="#f4796a" stroke="#f4796a" stroke-width="1">2</text></svg>
  <div class="num" style="left:10px;bottom:4px">8</div>
</div>
<div class="a th" style="left:1858px;background:#000;width:80px">
  <div class="a" style="left:25.5px;top:6.5px;width:20px;height:7px;border-radius:4px;border:1px solid #a06a60"></div>
  <div class="a" style="left:30px;top:9.5px;width:11px;height:1.2px;background:#ddd"></div>
  <div class="a" style="left:14px;top:16.5px;width:50px;height:1px;background:#666"></div>
  <div class="a" style="left:9px;top:21.5px;width:50px;height:51px;background:#2a1a50"></div>
  <div class="a" style="left:10px;top:22.5px;width:48px;height:49px;background:linear-gradient(180deg,#3d7ee8 0,#6a4ee8 6px,#fff 6px)"></div>
  <div class="a" style="left:21px;top:34px;width:28px;height:29px;background:linear-gradient(180deg,#d6ccc4,#e8ded6 40%,#c9a27e 80%,#b8784a 90%,#e8e0d8)"></div>
  <div class="a" style="left:0;top:40px;width:45px;height:41px;background:radial-gradient(ellipse 40px 30px at 10% 100%,rgba(0,0,0,0.95),rgba(0,0,0,0) 100%)"></div>
  <div class="num" style="left:11px;bottom:4px">9</div>
</div>
<div class="a" style="left:540px;top:900px;width:1380px;height:19px;background:#f1f1f1"></div>
<div class="a" style="left:561px;top:901px;width:379px;height:17px;background:#c1c1c1"></div>
<svg class="a" style="left:540px;top:131px" width="1380" height="800" viewBox="540 131 1380 800">
  <path d="M1905 147 L1909.6 141.6 L1914.2 147 Z" fill="#a3a3a3"/>
  <path d="M1905 758.5 L1909.6 764 L1914.2 758.5 Z" fill="#505050"/>
  <path d="M554 778.8 L548.6 783.4 L554 788 Z" fill="#a3a3a3"/>
  <path d="M1886 778.8 L1891.4 783.4 L1886 788 Z" fill="#a3a3a3"/>
  <path d="M554 905 L548.6 909.6 L554 914.2 Z" fill="#a3a3a3"/>
  <path d="M1906.5 905 L1911.9 909.6 L1906.5 914.2 Z" fill="#505050"/>
</svg>
<!-- footer -->
<div class="a ft" style="left:591px;top:935px">Notes</div>
<div class="a ft" style="left:701px;top:935px">Duration</div>
<div class="a ft" style="left:836px;top:935px">Timer</div>
<div class="a ft" style="left:1287px;top:935px;letter-spacing:0.1px">Page 2 / 29</div>
<div class="a ft" style="left:1702px;top:935px">43%</div>
<div class="a" style="left:1398px;top:931px;width:1px;height:28px;background:#dcdde0"></div>
<div class="a" style="left:1419px;top:943px;width:250px;height:3px;border-radius:2px;background:#dcdde0"></div>
<div class="a" style="left:1419px;top:943px;width:92px;height:3px;border-radius:2px;background:#a4a5a8"></div>
<div class="a" style="left:1503px;top:936.5px;width:16.5px;height:16.5px;border-radius:50%;background:#0d1216"></div>
<svg class="a" style="left:540px;top:918px" width="1380" height="52" viewBox="540 918 1380 52">
  <g fill="none" stroke="#0d1216" stroke-width="1.9" stroke-linecap="round" stroke-linejoin="round">
    <path d="M560.5 936.7 H575.5 M560.5 941.5 H573 M560.5 946.3 H568 M560.5 951.2 H564"/>
    <path d="M568.5 953 L569.5 948.5 L578.5 939.5 A2 2 0 0 1 581.6 942.6 L572.6 951.6 Z"/>
    <rect x="669.5" y="937" width="23" height="15.8" rx="2"/>
    <circle cx="815.3" cy="946.5" r="8.3"/>
    <path d="M811.3 934.5 H819.3 M815.3 934.5 V938 M815.3 946.5 L812.5 941.8 M822.2 939.2 L823.8 937.6"/>
    <rect x="1780.8" y="935.8" width="7.6" height="7.6" rx="1.8"/>
    <rect x="1792" y="935.8" width="7.6" height="7.6" rx="1.8"/>
    <rect x="1780.8" y="947" width="7.6" height="7.6" rx="1.8"/>
    <rect x="1792" y="947" width="7.6" height="7.6" rx="1.8"/>
    <path d="M1831 954 L1838.2 946.8 M1831 948 V954 H1837 M1842 940.2 L1849.2 933 M1843.4 933 H1849.2 V938.8"/>
    <circle cx="1889.8" cy="945" r="11"/>
    <path d="M1886.6 942 A3.3 3.3 0 1 1 1891.6 944.6 Q1889.8 945.6 1889.8 947.6"/>
  </g>
  <path d="M678.2 941.4 L684 944.9 L678.2 948.4 Z" fill="#0d1216"/>
  <circle cx="1889.8" cy="950.6" r="1.3" fill="#0d1216"/>
</svg>

<!-- collapse handle -->
<svg class="a" style="left:538px;top:470px" width="20" height="104" viewBox="0 0 20 104">
  <path d="M2 0 Q2 10 10 18 Q17 25 17 36 V68 Q17 79 10 86 Q2 94 2 104 Z" fill="#252628"/>
  <path d="M10 46 L6.6 50 L10 54" fill="none" stroke="#e6e6e6" stroke-width="1.8" stroke-linecap="round" stroke-linejoin="round"/>
</svg>
</body></html>
